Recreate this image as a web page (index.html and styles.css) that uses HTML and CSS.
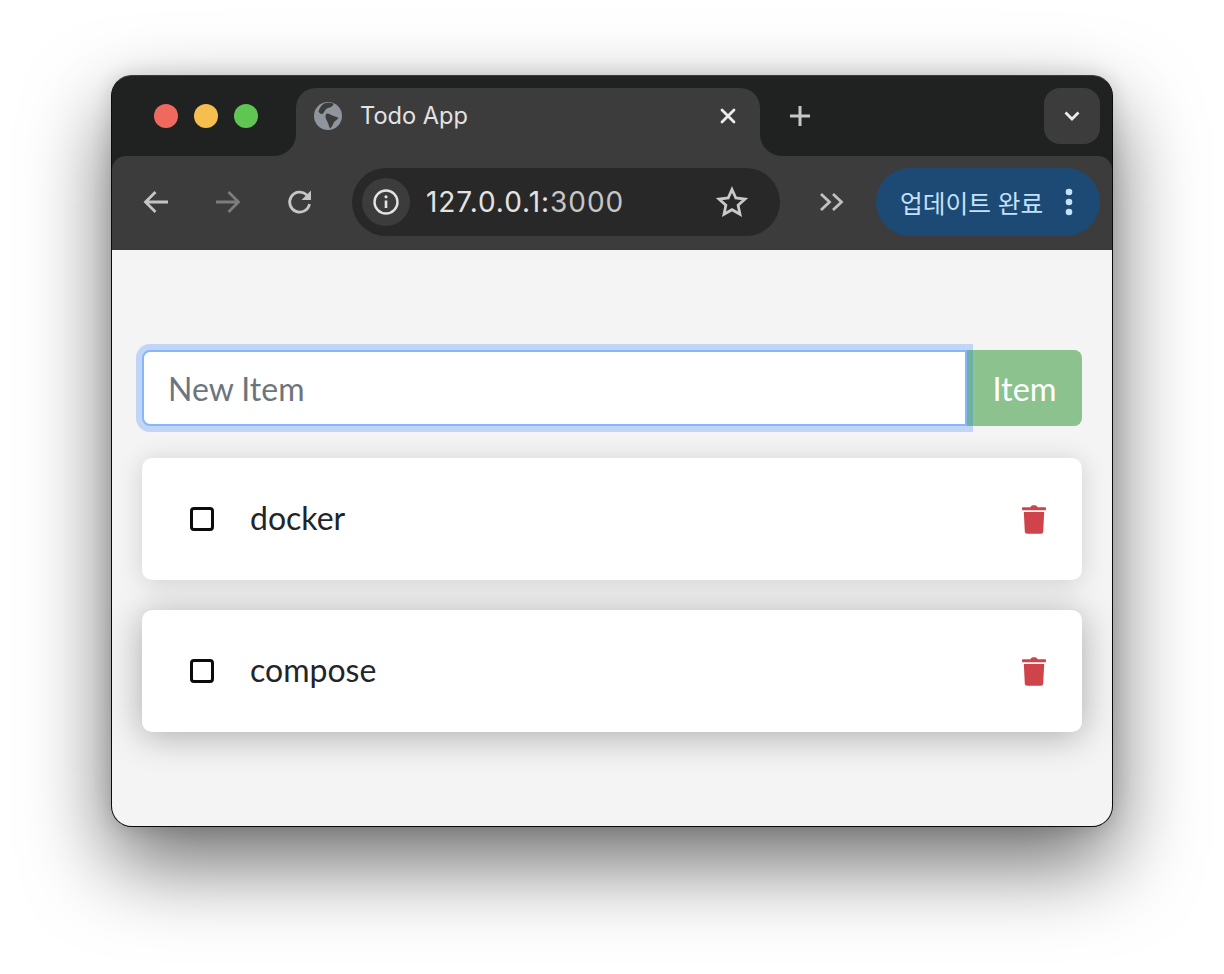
FILE: index.html
```html
<!DOCTYPE html>
<html lang="ko">
<head>
<meta charset="utf-8">
<title>Todo App</title>
<link rel="stylesheet" href="styles.css">
</head>
<body>
<div class="window">
  <header class="tabstrip">
    <div class="lights">
      <span class="light red"></span>
      <span class="light yellow"></span>
      <span class="light green"></span>
    </div>
    <div class="tab">
      <svg class="favicon" viewBox="0 0 28 28"><circle cx="14" cy="14" r="14" fill="#8e959d"/><path d="M10 1.500C13 .5 17 .5 19.500 1.800 19.500 4 16.500 5.500 14 6 11.500 6.500 11 9 9 11.500 7.500 12.800 5.500 11.500 4.500 9.500 5.500 6 7.500 3 10 1.500zM12 12C14 10.500 16 12.500 18.500 13.500 21 14.500 23 15 24.500 16 23 18 20.500 19 19.500 21 18.500 23.500 18 25 16 26.500 14.500 24 14.500 21 13 19 11.500 17 11 14 12 12z" fill="#3c3c3c"/></svg>
      <span class="tab-title">Todo App</span>
      <svg class="tab-close" viewBox="0 0 16 16"><path d="M2 2l12 12M14 2L2 14" stroke="#eceded" stroke-width="2.800" stroke-linecap="round"/></svg>
    </div>
    <svg class="newtab" viewBox="0 0 20 20"><path d="M10 0v20M0 10h20" stroke="#c6c7c7" stroke-width="3"/></svg>
    <div class="tabsearch">
      <svg class="tabsearch-icon" viewBox="0 0 16 10"><path d="M1.500 1.500L8 8l6.500-6.500" fill="none" stroke="#eceded" stroke-width="2.800"/></svg>
    </div>
  </header>
  <nav class="toolbar">
    <svg class="navicon back" viewBox="0 0 26 24"><path d="M25 12H3M12.500 2L2.500 12l10 10" fill="none" stroke="#c4c5c5" stroke-width="2.800"/></svg>
    <svg class="navicon forward" viewBox="0 0 26 24"><path d="M1 12h22M13.500 2l10 10-10 10" fill="none" stroke="#7c7d7d" stroke-width="2.800"/></svg>
    <svg class="navicon reload" viewBox="0 0 26 26"><path d="M22.500 15a10 10 0 1 1-3-9.200L22 8" fill="none" stroke="#c4c5c5" stroke-width="2.800"/><path d="M24 1.500V11H14.500z" fill="#c4c5c5"/></svg>
    <div class="omnibox">
      <span class="infochip">
        <svg class="infoicon" viewBox="0 0 26 26"><circle cx="13" cy="13" r="11.500" fill="none" stroke="#e3e3e3" stroke-width="2.400"/><path d="M13 11.500V19" stroke="#e3e3e3" stroke-width="2.600"/><circle cx="13" cy="7.800" r="1.600" fill="#e3e3e3"/></svg>
      </span>
      <span class="url"><span class="host">127.0.0.1:</span><span class="port">3000</span></span>
      <svg class="star" viewBox="0 0 32 32"><path d="M16 3.500l3.800 8.500 9.200 1-6.900 6.200 1.900 9.100L16 23.700l-8 4.600 1.900-9.100L3 13l9.200-1z" fill="none" stroke="#c9c9c9" stroke-width="2.800"/></svg>
    </div>
    <svg class="chevrons" viewBox="0 0 26 20"><path d="M2 2l8.500 8L2 18M14 2l8.500 8L14 18" fill="none" stroke="#c0c1c1" stroke-width="2.800"/></svg>
    <div class="update">
      <span class="update-label">업데이트 완료</span>
      <svg class="kebab" viewBox="0 0 8 28"><circle cx="4" cy="4" r="3.300"/><circle cx="4" cy="14" r="3.300"/><circle cx="4" cy="24" r="3.300"/></svg>
    </div>
  </nav>
  <main class="page">
    <form class="add-form">
      <input class="add-input" type="text" placeholder="New Item">
      <button class="add-button" type="button">Item</button>
    </form>
    <ul class="items">
      <li class="item">
        <span class="checkbox"></span>
        <span class="item-name">docker</span>
        <svg class="trash" viewBox="0 0 24 29"><path d="M8.500 2.200C9 .8 10 .3 12 .3s3 .5 3.500 1.900H23c.6 0 1 .5 1 1.100v.9c0 .6-.4 1-1 1H1c-.6 0-1-.4-1-1v-.9c0-.6.400-1.100 1-1.100zM1.800 7h20.400l-1 19.500c-.1 1.300-1 2.300-2.300 2.300H5.100c-1.300 0-2.200-1-2.300-2.300z"/></svg>
      </li>
      <li class="item item-raised">
        <span class="checkbox"></span>
        <span class="item-name">compose</span>
        <svg class="trash" viewBox="0 0 24 29"><path d="M8.500 2.200C9 .8 10 .3 12 .3s3 .5 3.500 1.900H23c.6 0 1 .5 1 1.100v.9c0 .6-.4 1-1 1H1c-.6 0-1-.4-1-1v-.9c0-.6.400-1.100 1-1.100zM1.800 7h20.400l-1 19.500c-.1 1.300-1 2.300-2.300 2.300H5.100c-1.300 0-2.200-1-2.300-2.300z"/></svg>
      </li>
    </ul>
  </main>
</div>
</body>
</html>
```
FILE: styles.css
```css
* { box-sizing: border-box; }
html, body { margin: 0; padding: 0; }
body {
  width: 1224px;
  height: 974px;
  background: #fff;
  padding: 75px 111px 0;
  overflow: hidden;
  font-family: "Lato", "Noto Sans CJK KR", sans-serif;
}
.window {
  width: 1002px;
  height: 752px;
  border: 1px solid #0a0a0a;
  border-top-color: #3a3a3a;
  border-radius: 21px;
  display: flex;
  flex-direction: column;
  background: #202221;
  box-shadow: 0 36px 84px rgba(0,0,0,.58), 0 0 20px rgba(0,0,0,.14);
}
.tabstrip {
  height: 80px;
  flex: none;
  background: #202221;
  border-radius: 20px 20px 0 0;
  display: flex;
  align-items: flex-start;
  padding-top: 12px;
}
.lights { display: flex; gap: 16px; padding: 16px 0 0 42px; width: 184px; flex: none; }
.light { width: 24px; height: 24px; border-radius: 50%; }
.red { background: #f0695f; }
.yellow { background: #f6bd4f; }
.green { background: #5fc654; }
.tab {
  position: relative;
  width: 464px;
  height: 68px;
  flex: none;
  background: #3c3c3c;
  border-radius: 20px 20px 0 0;
  display: flex;
  align-items: flex-start;
  padding: 14px 24px 0 18px;
}
.tab::before, .tab::after {
  content: "";
  position: absolute;
  bottom: 0;
  width: 22px;
  height: 22px;
}
.tab::before { left: -22px; background: radial-gradient(circle at 0 0, #202221 21.500px, #3c3c3c 22.500px); }
.tab::after { right: -22px; background: radial-gradient(circle at 100% 0, #202221 21.500px, #3c3c3c 22.500px); }
.favicon { width: 28px; height: 28px; flex: none; }
.tab-title {
  margin-left: 18px;
  font-family: "Inter", sans-serif;
  font-size: 23.600px;
  line-height: 28px;
  color: #e3e3e3;
  flex: 1;
}
.tab-close { width: 16px; height: 16px; flex: none; margin-top: 6px; }
.newtab { width: 20px; height: 20px; flex: none; margin: 18px 0 0 30px; }
.tabsearch {
  width: 56px;
  height: 56px;
  border-radius: 16px;
  background: #3c3c3c;
  margin-left: auto;
  margin-right: 12px;
  flex: none;
  display: flex;
  align-items: center;
  justify-content: center;
}
.tabsearch-icon { width: 16px; height: 10px; margin-top: -1px; }
.toolbar {
  height: 94px;
  flex: none;
  background: #3c3c3c;
  border-radius: 14px 14px 0 0;
  display: flex;
  align-items: center;
  padding: 0 12px 2px 31px;
}
.navicon { flex: none; }
.back { width: 26px; height: 24px; }
.forward { width: 26px; height: 24px; margin-left: 46px; }
.reload { width: 26px; height: 26px; margin-left: 46px; }
.omnibox {
  width: 428px;
  height: 68px;
  border-radius: 34px;
  background: #282828;
  margin-left: 39px;
  display: flex;
  align-items: center;
  padding: 0 32px 0 10px;
  flex: none;
}
.infochip {
  width: 48px;
  height: 48px;
  border-radius: 50%;
  background: #3c3c3c;
  display: flex;
  align-items: center;
  justify-content: center;
  flex: none;
}
.infoicon { width: 26px; height: 26px; }
.url {
  margin-left: 16px;
  font-family: "Inter", sans-serif;
  font-size: 28px;
  letter-spacing: .95px;
  flex: 1;
}
.host { color: #e3e3e3; }
.port { color: #c6c6c6; }
.star { width: 32px; height: 32px; flex: none; }
.chevrons { width: 26px; height: 20px; margin-left: 39px; flex: none; }
.update {
  width: 224px;
  height: 68px;
  border-radius: 34px;
  background: #1d4a75;
  margin-left: 31px;
  display: flex;
  align-items: center;
  padding-left: 24px;
  flex: none;
}
.update-label {
  font-family: "Noto Sans CJK KR", sans-serif;
  font-size: 24.700px;
  color: #c3e2fb;
  white-space: nowrap;
}
.kebab { width: 8px; height: 28px; fill: #c3e2fb; margin-left: 22px; flex: none; }
.page {
  flex: 1;
  padding: 100px 30px 0;
  background: #f4f4f4;
  border-radius: 0 0 20px 20px;
}
.add-form { display: flex; height: 76px; }
.add-input {
  position: relative;
  z-index: 1;
  width: 825px;
  height: 76px;
  flex: none;
  border: 2px solid #86b7fe;
  border-radius: 8px 0 0 8px;
  background: #fff;
  box-shadow: 0 0 0 6px rgba(13,110,253,.22);
  padding: 0 24px;
  font-family: "Lato", sans-serif;
  font-size: 32px;
  color: #212529;
  outline: none;
}
.add-input::placeholder { color: #6c757d; opacity: 1; }
.add-button {
  flex: 1;
  height: 76px;
  border: 0;
  border-radius: 0 8px 8px 0;
  background: #8cc28d;
  color: #fff;
  font-family: "Lato", sans-serif;
  font-size: 32.500px;
  padding: 0;
}
.items { list-style: none; margin: 32px 0 0; padding: 0; display: flex; flex-direction: column; gap: 30px; }
.item {
  height: 122px;
  background: #fff;
  border-radius: 10px;
  box-shadow: 0 2px 26px rgba(0,0,0,.15);
  display: flex;
  align-items: center;
  padding: 0 36px 0 48px;
}
.item-raised { box-shadow: 0 4px 36px rgba(0,0,0,.3); }
.checkbox {
  width: 24px;
  height: 24px;
  border: 3px solid #0b0b0b;
  border-radius: 4px;
  flex: none;
}
.item-name { margin-left: 36px; padding-bottom: 4px; font-size: 32px; color: #212529; flex: 1; }
.trash { width: 24px; height: 29px; fill: #cf444b; flex: none; }
```
